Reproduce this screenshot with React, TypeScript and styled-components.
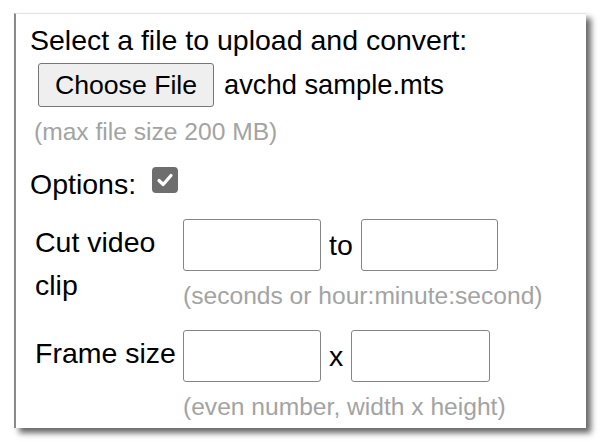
import React from "react";
import styled, { createGlobalStyle } from "styled-components";

const Global = createGlobalStyle`
  html, body { margin: 0; padding: 0; background: #ffffff; }
  body { font-family: "Liberation Sans", Arial, sans-serif; color: #000; }
`;

const Page = styled.div`
  padding: 13px 0 0 14px;
  height: 442px;
  box-sizing: border-box;
`;

const Panel = styled.div`
  box-sizing: border-box;
  width: 572px;
  height: 415px;
  background: #fff;
  border-left: 2px solid #8a8a8a;
  border-top: 1px solid #e2e2e2;
  box-shadow: 5px 5px 6px rgba(0, 0, 0, 0.6);
  padding: 10px 0 0 14px;
  display: flex;
  flex-direction: column;
  align-items: flex-start;
  overflow: visible;
`;

const Title = styled.div`
  font-size: 28.5px;
  line-height: 32px;
  white-space: nowrap;
`;

const FileRow = styled.div`
  margin-top: 7px;
  margin-left: 8px;
  display: flex;
  align-items: center;
  height: 44px;
`;

const FileButton = styled.button`
  box-sizing: border-box;
  width: 176px;
  height: 44px;
  padding: 0;
  font-family: "Liberation Sans", Arial, sans-serif;
  font-size: 26.67px;
  color: #000;
  background: #efefef;
  border: 1px solid #767676;
  border-radius: 3px;
`;

const FileName = styled.span`
  margin-left: 10px;
  font-size: 27.3px;
  line-height: 32px;
  white-space: nowrap;
`;

const Hint = styled.div<{ $indent?: number; $top?: number }>`
  margin-top: ${(p) => p.$top ?? 11}px;
  margin-left: ${(p) => p.$indent ?? 0}px;
  font-size: 24.6px;
  line-height: 28px;
  color: #a3a3a3;
  white-space: nowrap;
`;

const OptionsRow = styled.div`
  margin-top: 21px;
  display: flex;
  align-items: flex-start;
`;

const OptionsLabel = styled.span`
  margin-top: 1px;
  font-size: 28.5px;
  line-height: 32px;
`;

const Check = styled.span`
  margin-left: 16px;
  width: 26px;
  height: 26px;
  border-radius: 4px;
  background: #6e6e6e;
  display: flex;
  align-items: center;
  justify-content: center;
`;

const OptionTable = styled.div`
  margin-top: 19px;
  margin-left: 5px;
  display: grid;
  grid-template-columns: 148px auto;
  row-gap: 20px;
`;

const FieldLabel = styled.div`
  padding-top: 2px;
  font-size: 28.5px;
  line-height: 43px;
  width: 144px;
`;

const FieldBlock = styled.div`
  display: flex;
  flex-direction: column;
  align-items: flex-start;
`;

const Inputs = styled.div`
  display: flex;
  align-items: center;
  height: 52px;
`;

const TextInput = styled.input<{ $w: number }>`
  box-sizing: border-box;
  width: ${(p) => p.$w}px;
  height: 52px;
  border: 1px solid #858585;
  border-radius: 3px;
  background: #fff;
  padding: 0 4px;
  font-size: 24px;
  font-family: "Liberation Sans", Arial, sans-serif;
  outline: none;
`;

const Sep = styled.span`
  margin: 0 8px;
  font-size: 28.5px;
  line-height: 32px;
`;

export default function App() {
  return (
    <>
      <Global />
      <Page>
        <Panel>
          <Title>Select a file to upload and convert:</Title>
          <FileRow>
            <FileButton type="button">Choose File</FileButton>
            <FileName>avchd sample.mts</FileName>
          </FileRow>
          <Hint $indent={4}>(max file size 200 MB)</Hint>
          <OptionsRow>
            <OptionsLabel>Options:</OptionsLabel>
            <Check>
              <svg width="20" height="20" viewBox="0 0 20 20">
                <path
                  d="M4 10.5 L8.2 14.5 L16 5.5"
                  fill="none"
                  stroke="#fff"
                  strokeWidth="3.2"
                  strokeLinecap="round"
                  strokeLinejoin="round"
                />
              </svg>
            </Check>
          </OptionsRow>
          <OptionTable>
            <FieldLabel>Cut video clip</FieldLabel>
            <FieldBlock>
              <Inputs>
                <TextInput $w={138} />
                <Sep>to</Sep>
                <TextInput $w={137} />
              </Inputs>
              <Hint>(seconds or hour:minute:second)</Hint>
            </FieldBlock>
            <FieldLabel>Frame size</FieldLabel>
            <FieldBlock>
              <Inputs>
                <TextInput $w={138} />
                <Sep>x</Sep>
                <TextInput $w={139} />
              </Inputs>
              <Hint>(even number, width x height)</Hint>
            </FieldBlock>
          </OptionTable>
        </Panel>
      </Page>
    </>
  );
}
